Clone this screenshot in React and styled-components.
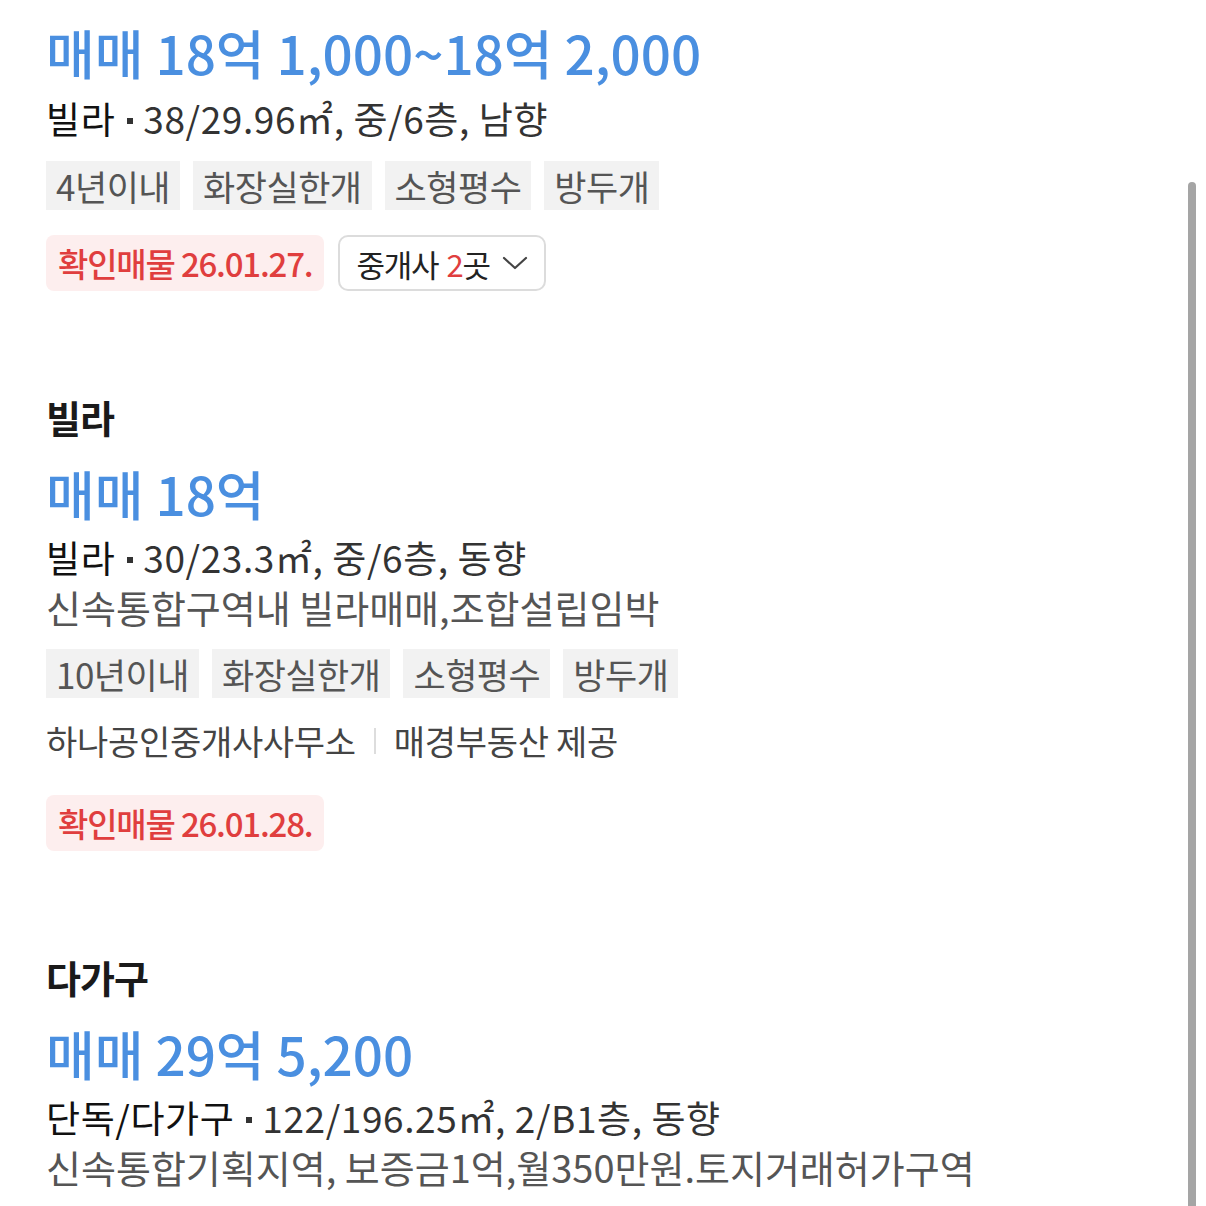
import styled, { createGlobalStyle } from 'styled-components'

const GlobalStyle = createGlobalStyle`
  html, body {
    margin: 0;
    padding: 0;
    background: #ffffff;
  }
  body {
    font-family: "Noto Sans CJK KR", "Noto Sans", sans-serif;
    color: #222;
    overflow: hidden;
  }
`

const listings = [
  {
    id: 1,
    price: '매매 18억 1,000~18억 2,000',
    type: '빌라',
    spec: '38/29.96㎡, 중/6층, 남향',
    tags: ['4년이내', '화장실한개', '소형평수', '방두개'],
    confirmed: '26.01.27.',
    agents: 2,
  },
  {
    id: 2,
    category: '빌라',
    price: '매매 18억',
    type: '빌라',
    spec: '30/23.3㎡, 중/6층, 동향',
    desc: '신속통합구역내 빌라매매,조합설립임박',
    tags: ['10년이내', '화장실한개', '소형평수', '방두개'],
    agent: '하나공인중개사사무소',
    source: '매경부동산 제공',
    confirmed: '26.01.28.',
  },
  {
    id: 3,
    category: '다가구',
    price: '매매 29억 5,200',
    type: '단독/다가구',
    spec: '122/196.25㎡, 2/B1층, 동향',
    desc: '신속통합기획지역, 보증금1억,월350만원.토지거래허가구역',
  },
]

const Chevron = () => (
  <svg width="26" height="16" viewBox="0 0 26 16" fill="none">
    <polyline points="2,3 13,13 24,3" stroke="#444" strokeWidth="2.2" strokeLinecap="round" strokeLinejoin="round" />
  </svg>
)

const App = () => {
  return (
    <>
      <GlobalStyle />
      <Page>
        {listings.map((item) => (
          <Listing key={item.id} first={item.id === 1}>
            {item.category && <Category>{item.category}</Category>}
            <Price first={item.id === 1}>{item.price}</Price>
            <Spec>
              <b>{item.type}</b>
              <Dot />
              {item.spec}
            </Spec>
            {item.desc && <Desc>{item.desc}</Desc>}
            {item.tags && (
              <Tags>
                {item.tags.map((t) => (
                  <Tag key={t}>{t}</Tag>
                ))}
              </Tags>
            )}
            {item.agent && (
              <Agent>
                {item.agent}
                <Divider />
                {item.source}
              </Agent>
            )}
            {item.confirmed && (
              <BadgeRow spaced={!!item.agent}>
                <Confirmed>확인매물 {item.confirmed}</Confirmed>
                {item.agents && (
                  <AgentButton>
                    중개사 <em>{item.agents}</em>곳
                    <Chevron />
                  </AgentButton>
                )}
              </BadgeRow>
            )}
          </Listing>
        ))}
      </Page>
      <Scrollbar />
    </>
  )
}

export default App

const Page = styled.div`
  padding: 20px 0 0 46px;
  display: flex;
  flex-direction: column;
`

const Listing = styled.section`
  display: flex;
  flex-direction: column;
  margin-top: ${({ first }) => (first ? '0' : '102px')};
`

const Category = styled.h2`
  margin: 0 0 20px;
  font-size: 38px;
  line-height: 48px;
  font-weight: 700;
  color: #1a1a1a;
  letter-spacing: -1px;
`

const Price = styled.div`
  font-size: 53px;
  line-height: 64px;
  font-weight: 500;
  color: #4a8fe0;
  letter-spacing: 0;
  margin-bottom: ${({ first }) => (first ? '10px' : '8px')};
`

const Spec = styled.div`
  display: flex;
  align-items: center;
  font-size: 37px;
  line-height: 49px;
  color: #333;
  letter-spacing: 0.6px;
  b {
    font-weight: 400;
    color: #111;
  }
`

const Dot = styled.span`
  width: 6px;
  height: 6px;
  background: #333;
  margin: 4px 10px 0 12px;
`

const Desc = styled.div`
  font-size: 38px;
  line-height: 49px;
  color: #555;
  letter-spacing: 0;
`

const Tags = styled.div`
  display: flex;
  gap: 13px;
  margin-top: 18px;
`

const Tag = styled.span`
  height: 49px;
  display: flex;
  align-items: center;
  padding: 0 10px;
  background: #f2f2f2;
  color: #555;
  font-size: 35px;
  letter-spacing: -0.5px;
`

const Agent = styled.div`
  display: flex;
  align-items: center;
  margin-top: 19px;
  font-size: 34px;
  line-height: 48px;
  color: #444;
  letter-spacing: -0.3px;
`

const Divider = styled.span`
  width: 2px;
  height: 26px;
  background: #ddd;
  margin: 0 18px;
`

const BadgeRow = styled.div`
  display: flex;
  gap: 14px;
  margin-top: ${({ spaced }) => (spaced ? '30px' : '25px')};
`

const Confirmed = styled.span`
  height: 56px;
  display: flex;
  align-items: center;
  padding: 0 12px;
  border-radius: 8px;
  background: #fdeeee;
  color: #e03e3e;
  font-size: 33px;
  font-weight: 500;
  letter-spacing: -1.2px;
`

const AgentButton = styled.button`
  height: 56px;
  box-sizing: border-box;
  display: flex;
  align-items: center;
  padding: 0 16px 0 16px;
  border: 2px solid #dcdcdc;
  border-radius: 10px;
  background: #fff;
  color: #222;
  font-family: inherit;
  font-size: 31px;
  letter-spacing: -1.2px;
  em {
    font-style: normal;
    color: #e03e3e;
    margin-left: 8px;
  }
  svg {
    margin-left: 12px;
  }
`

const Scrollbar = styled.div`
  position: fixed;
  top: 182px;
  bottom: 0;
  left: 1188px;
  width: 8px;
  border-radius: 4px 4px 0 0;
  background: #a5a5a5;
`
